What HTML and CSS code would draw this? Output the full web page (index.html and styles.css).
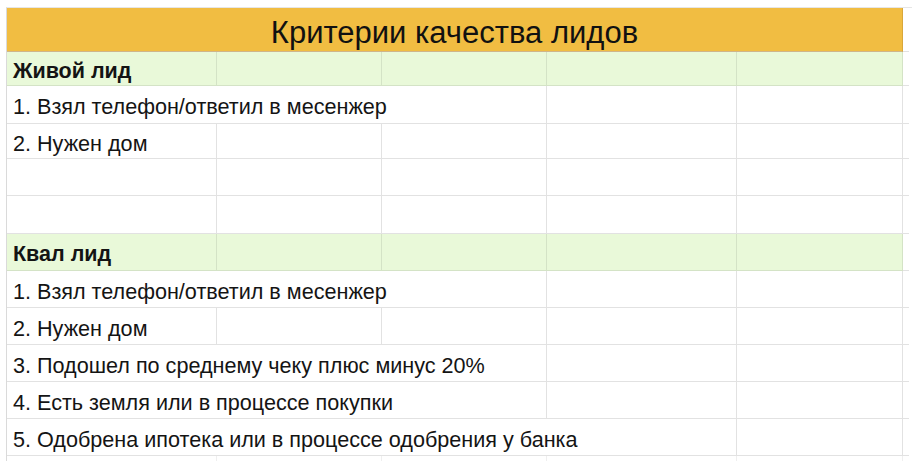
FILE: index.html
```html
<!DOCTYPE html>
<html lang="ru">
<head>
<meta charset="utf-8">
<title>Критерии качества лидов</title>
<link rel="stylesheet" href="styles.css">
</head>
<body>
<div class="sheet">
  <div class="grid">
    <div class="cell title">Критерии качества лидов</div>
    <div class="cell edge"></div>

    <div class="cell green bold">Живой лид</div>
    <div class="cell green"></div>
    <div class="cell green"></div>
    <div class="cell green"></div>
    <div class="cell green"></div>
    <div class="cell edge"></div>

    <div class="cell span3">1. Взял телефон/ответил в месенжер</div>
    <div class="cell"></div>
    <div class="cell"></div>
    <div class="cell edge"></div>

    <div class="cell">2. Нужен дом</div>
    <div class="cell"></div>
    <div class="cell"></div>
    <div class="cell"></div>
    <div class="cell"></div>
    <div class="cell edge"></div>

    <div class="cell"></div>
    <div class="cell"></div>
    <div class="cell"></div>
    <div class="cell"></div>
    <div class="cell"></div>
    <div class="cell edge"></div>

    <div class="cell"></div>
    <div class="cell"></div>
    <div class="cell"></div>
    <div class="cell"></div>
    <div class="cell"></div>
    <div class="cell edge"></div>

    <div class="cell green bold">Квал лид</div>
    <div class="cell green"></div>
    <div class="cell green"></div>
    <div class="cell green"></div>
    <div class="cell green"></div>
    <div class="cell edge"></div>

    <div class="cell span3">1. Взял телефон/ответил в месенжер</div>
    <div class="cell"></div>
    <div class="cell"></div>
    <div class="cell edge"></div>

    <div class="cell">2. Нужен дом</div>
    <div class="cell"></div>
    <div class="cell"></div>
    <div class="cell"></div>
    <div class="cell"></div>
    <div class="cell edge"></div>

    <div class="cell span3">3. Подошел по среднему чеку плюс минус 20%</div>
    <div class="cell"></div>
    <div class="cell"></div>
    <div class="cell edge"></div>

    <div class="cell span3">4. Есть земля или в процессе покупки</div>
    <div class="cell"></div>
    <div class="cell"></div>
    <div class="cell edge"></div>

    <div class="cell span4">5. Одобрена ипотека или в процессе одобрения у банка</div>
    <div class="cell"></div>
    <div class="cell edge"></div>

    <div class="cell stub"></div>
    <div class="cell stub"></div>
    <div class="cell stub"></div>
    <div class="cell stub"></div>
    <div class="cell stub"></div>
    <div class="cell stub edge"></div>
  </div>
</div>
</body>
</html>
```

FILE: styles.css
```css
* {
  box-sizing: border-box;
}

html, body {
  margin: 0;
  padding: 0;
  background: #ffffff;
}

body {
  font-family: "Liberation Sans", Arial, Helvetica, sans-serif;
  color: #141414;
}

.sheet {
  padding: 7px 0 0 6px;
  width: 912px;
  height: 470px;
  overflow: hidden;
}

.grid {
  display: grid;
  grid-template-columns: 210px 165px 165px 190px 166px 6px;
  grid-template-rows: 44px 34px 38px 35px 37px 38px 37px 37px 37px 37px 37px 37px 5px;
  border-top: 1px solid #e6e6e6;
  border-left: 1px solid #dadada;
}

.cell {
  border-right: 1px solid #e2e2e2;
  border-bottom: 1px solid #e2e2e2;
  display: flex;
  align-items: center;
  padding: 5px 0 0 6px;
  font-size: 21.6px;
  white-space: nowrap;
  overflow: visible;
  min-width: 0;
}

.title {
  grid-column: span 5;
  background: #f1bd42;
  justify-content: center;
  font-size: 31px;
  padding: 6px 0 0 0;
  border-right: 1px solid #d9a73a;
  border-bottom: 1px solid #cfb58a;
  color: #111;
}

.green {
  background: #e9f9d9;
  border-right-color: #d4e3c6;
  border-bottom-color: #d4e3c6;
}

.bold {
  font-weight: bold;
  font-size: 21.5px;
}

.span3 {
  grid-column: span 3;
}

.span4 {
  grid-column: span 4;
}

.edge {
  border-right: none;
  padding: 0;
}

.stub {
  border-bottom: none;
  border-right-color: #efefef;
}
```
